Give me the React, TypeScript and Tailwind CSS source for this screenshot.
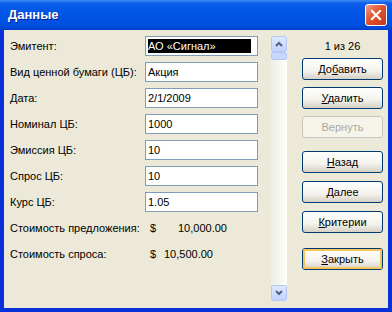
import React from 'react';

const font = "font-['Liberation_Sans',Arial,sans-serif]";

const fields = [
  { label: 'Эмитент:', value: 'АО «Сигнал»', selected: true },
  { label: 'Вид ценной бумаги (ЦБ):', value: 'Акция' },
  { label: 'Дата:', value: '2/1/2009' },
  { label: 'Номинал ЦБ:', value: '1000' },
  { label: 'Эмиссия ЦБ:', value: '10' },
  { label: 'Спрос ЦБ:', value: '10' },
  { label: 'Курс ЦБ:', value: '1.05' },
];

const XpButton = ({
  pre,
  key1,
  post,
  disabled,
  focused,
}: {
  pre?: string;
  key1?: string;
  post: string;
  disabled?: boolean;
  focused?: boolean;
}) => (
  <div
    className={
      'h-[22px] w-[81px] rounded-[3px] border flex items-center justify-center text-[11px] ' +
      (disabled
        ? 'border-[#c9c7ba] bg-[#f5f4ea] text-[#aca899]'
        : 'border-[#003c74] bg-[linear-gradient(to_bottom,#ffffff,#f3f2ec_60%,#d6d0c5)] text-black')
    }
  >
    <div
      className={
        'w-full h-full rounded-[2px] flex items-center justify-center ' +
        (focused ? 'shadow-[inset_0_0_0_2px_#f7c45c]' : '')
      }
    >
      <span>
        {pre}
        {key1 && <span className="underline underline-offset-1">{key1}</span>}
        {post}
      </span>
    </div>
  </div>
);

const Arrow = ({ up }: { up?: boolean }) => (
  <div className="h-[16px] w-[16px] rounded-[2px] border border-[#b4c8f6] bg-[linear-gradient(to_bottom,#dfe8fd,#c1d3fb)] flex items-center justify-center">
    <svg width="8" height="6" viewBox="0 0 8 6">
      <path
        d={up ? 'M1 5 L4 2 L7 5' : 'M1 1 L4 4 L7 1'}
        stroke="#4d6185"
        strokeWidth="2"
        fill="none"
      />
    </svg>
  </div>
);

export default function App() {
  return (
    <div className={`w-[392px] h-[312px] flex flex-col bg-[#0831d9] ${font}`}>
      <div className="h-[30px] shrink-0 flex items-center justify-between pl-[8px] pr-[5px] bg-[linear-gradient(to_bottom,#3d8cf9_0%,#0a5ce8_12%,#0055e5_50%,#0050e0_85%,#003dc6_100%)]">
        <span className="text-white font-bold text-[13px] [text-shadow:1px_1px_0_#0a1e8c]">Данные</span>
        <div className="w-[22px] h-[22px] rounded-[3px] border border-white bg-[linear-gradient(135deg,#f0a08a,#e0542e_45%,#c2381a)] flex items-center justify-center">
          <svg width="12" height="12" viewBox="0 0 12 12">
            <path d="M2 2 L10 10 M10 2 L2 10" stroke="white" strokeWidth="2.2" strokeLinecap="square" />
          </svg>
        </div>
      </div>
      <div className="flex-1 mx-[4px] mb-[4px] bg-[#ece9d8] flex text-[11px] text-black">
        <div className="pl-[6px] pt-[6px] flex flex-col gap-[6px]">
          {fields.map((f) => (
            <div key={f.label} className="h-[20px] flex items-center">
              <div className="w-[135px]">{f.label}</div>
              <div className="w-[113px] h-[20px] border border-[#7f9db9] bg-white flex items-center px-[2px]">
                {f.selected ? (
                  <span className="bg-black text-white pr-[4px] leading-[14px] w-[103px]">{f.value}</span>
                ) : (
                  <span>{f.value}</span>
                )}
              </div>
            </div>
          ))}
          <div className="h-[20px] flex items-center">
            <div className="w-[140px]">Стоимость предложения:</div>
            <div className="w-[28px]">$</div>
            <div>10,000.00</div>
          </div>
          <div className="h-[20px] flex items-center">
            <div className="w-[140px]">Стоимость спроса:</div>
            <div className="w-[14px]">$</div>
            <div>10,500.00</div>
          </div>
        </div>
        <div className="ml-[13px] mt-[6px] w-[16px] h-[265px] flex flex-col bg-[linear-gradient(to_right,#eeede5,#fefefb)]">
          <Arrow up />
          <div className="h-[8px] w-[16px] rounded-[2px] border border-[#b4c8f6] bg-[#c8d6fb]" />
          <div className="flex-1" />
          <Arrow />
        </div>
        <div className="ml-[15px] pt-[6px] flex flex-col">
          <div className="h-[20px] flex items-center justify-center w-[81px]">1 из 26</div>
          <div className="mt-[2px] flex flex-col gap-[7px]">
            <XpButton pre="До" key1="б" post="авить" />
            <XpButton key1="У" post="далить" />
            <XpButton post="Вернуть" disabled />
          </div>
          <div className="mt-[13px] flex flex-col gap-[8px]">
            <XpButton key1="Н" post="азад" />
            <XpButton key1="Д" post="алее" />
            <XpButton key1="К" post="ритерии" />
          </div>
          <div className="mt-[15px]">
            <XpButton key1="З" post="акрыть" focused />
          </div>
        </div>
      </div>
    </div>
  );
}
